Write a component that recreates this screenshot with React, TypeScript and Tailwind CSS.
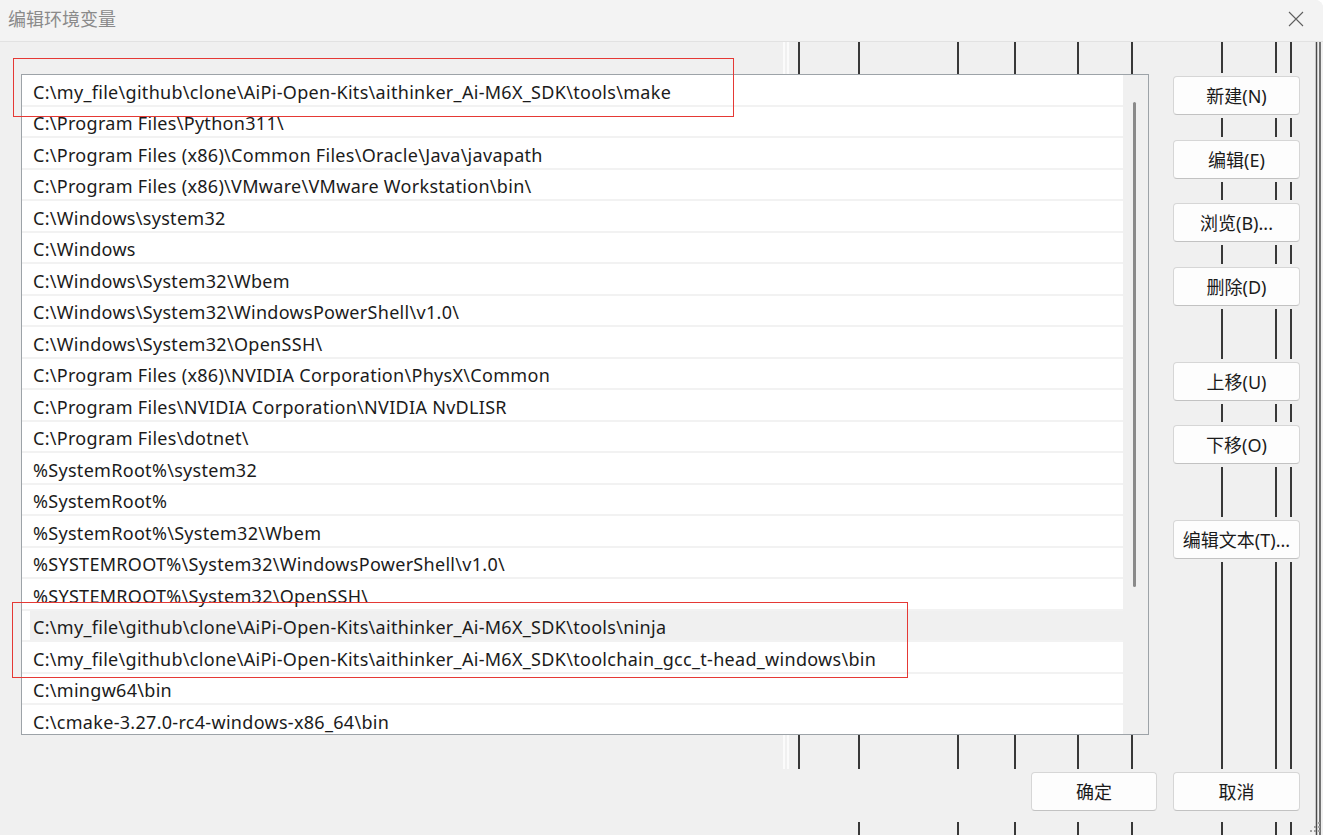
import React from "react";

const FONT = { fontFamily: '"Noto Sans", "Noto Sans CJK SC", sans-serif' };

const paths = [
  "C:\\my_file\\github\\clone\\AiPi-Open-Kits\\aithinker_Ai-M6X_SDK\\tools\\make",
  "C:\\Program Files\\Python311\\",
  "C:\\Program Files (x86)\\Common Files\\Oracle\\Java\\javapath",
  "C:\\Program Files (x86)\\VMware\\VMware Workstation\\bin\\",
  "C:\\Windows\\system32",
  "C:\\Windows",
  "C:\\Windows\\System32\\Wbem",
  "C:\\Windows\\System32\\WindowsPowerShell\\v1.0\\",
  "C:\\Windows\\System32\\OpenSSH\\",
  "C:\\Program Files (x86)\\NVIDIA Corporation\\PhysX\\Common",
  "C:\\Program Files\\NVIDIA Corporation\\NVIDIA NvDLISR",
  "C:\\Program Files\\dotnet\\",
  "%SystemRoot%\\system32",
  "%SystemRoot%",
  "%SystemRoot%\\System32\\Wbem",
  "%SYSTEMROOT%\\System32\\WindowsPowerShell\\v1.0\\",
  "%SYSTEMROOT%\\System32\\OpenSSH\\",
  "C:\\my_file\\github\\clone\\AiPi-Open-Kits\\aithinker_Ai-M6X_SDK\\tools\\ninja",
  "C:\\my_file\\github\\clone\\AiPi-Open-Kits\\aithinker_Ai-M6X_SDK\\toolchain_gcc_t-head_windows\\bin",
  "C:\\mingw64\\bin",
  "C:\\cmake-3.27.0-rc4-windows-x86_64\\bin",
];

// dark artefact lines behind the dialog body
const fullLines = [859, 958, 1015, 1078, 1132, 1222, 1276, 1291];

function Btn({ label, w = "w-[127px]" }: { label: string; w?: string }) {
  return (
    <div
      className={`${w} h-[39px] rounded-[4px] border border-[#d6d6d6] border-b-[#c2c2c2] bg-[#fdfdfd] flex items-center justify-center text-[18px] text-[#1b1b1b] leading-none`}
    >
      {label}
    </div>
  );
}

function BtnSlot({ label, mt }: { label: string; mt: string }) {
  return (
    <div className={`${mt} bg-[#f0f0f0] py-[3px] pl-[13px] pr-[10px]`}>
      <Btn label={label} />
    </div>
  );
}

export default function App() {
  return (
    <div className="w-[1326px] h-[835px] bg-white overflow-hidden" style={FONT}>
      <div className="relative w-[1323px] h-[835px] bg-[#f0f0f0] rounded-tr-[8px] overflow-hidden">
        {/* title bar */}
        <div className="h-[42px] bg-[#f3f3f3] border-b border-[#e2e2e2] flex items-center justify-between pl-[8px] pr-[19px]">
          <span className="text-[18px] text-[#8a8a8a] leading-none -mt-[4px]">编辑环境变量</span>
          <svg width="16" height="16" viewBox="0 0 16 16" className="-mt-[4px]">
            <path d="M1 1 L15 15 M15 1 L1 15" stroke="#5f5f5f" strokeWidth="1.1" fill="none" />
          </svg>
        </div>

        {/* body */}
        <div className="relative h-[793px]">
          <svg className="absolute inset-0" width="1323" height="793">
            <line x1="784" y1="0" x2="784" y2="731" stroke="#ffffff" strokeWidth="1.5" />
            <line x1="788" y1="0" x2="788" y2="731" stroke="#ffffff" strokeWidth="1.5" />
            <line x1="799" y1="0" x2="799" y2="731" stroke="#383838" strokeWidth="2" />
            {fullLines.map((x) => (
              <line key={x} x1={x} y1="0" x2={x} y2="793" stroke="#383838" strokeWidth="2" />
            ))}
            <line x1="1316.5" y1="0" x2="1316.5" y2="793" stroke="#4a4a4a" strokeWidth="1.5" />
            <line x1="1320" y1="0" x2="1320" y2="793" stroke="#4a4a4a" strokeWidth="1.5" />
            {[
              [1319, 781],
              [1319, 785],
              [1315, 785],
              [1319, 789],
              [1315, 789],
              [1311, 789],
            ].map(([cx, cy]) => (
              <rect key={`${cx}-${cy}`} x={cx - 1} y={cy - 1} width="2" height="2" fill="#a0a0a0" />
            ))}
          </svg>

          <div className="relative flex flex-col">
            <div className="flex items-start">
              {/* list */}
              <div className="ml-[21px] mt-[32px] w-[1128px] h-[661px] border border-[#9da3a8] bg-white flex overflow-hidden">
                <div className="flex-1 flex flex-col">
                  {paths.map((p, i) => (
                    <div key={i} className="h-[31.5px] shrink-0 border-b-2 border-[#f2f2f2] pl-[8px]">
                      <div
                        className={`h-full flex items-center pl-[3px] pt-[4px] ${i === 17 ? "bg-[#f0f0f0]" : ""}`}
                      >
                        <span className="text-[18px] text-[#1b1b1b] leading-none whitespace-nowrap tracking-[0.3px]">
                          {p}
                        </span>
                      </div>
                    </div>
                  ))}
                </div>
                <div className="w-[25px] h-full bg-[#f0f0f0]">
                  <div className="mt-[27px] ml-[10px] w-[3px] h-[485px] rounded-full bg-[#8a8a8a]" />
                </div>
              </div>

              {/* right buttons */}
              <div className="ml-[11px] w-[150px] mt-[31px] flex flex-col">
                <BtnSlot label="新建(N)" mt="mt-0" />
                <BtnSlot label="编辑(E)" mt="mt-[19px]" />
                <BtnSlot label="浏览(B)..." mt="mt-[18px]" />
                <BtnSlot label="删除(D)" mt="mt-[19px]" />
                <BtnSlot label="上移(U)" mt="mt-[50px]" />
                <BtnSlot label="下移(O)" mt="mt-[18px]" />
                <BtnSlot label="编辑文本(T)..." mt="mt-[50px]" />
              </div>
            </div>

            {/* footer */}
            <div className="mt-[34px] w-[1310px] h-[53px] bg-[#f0f0f0] pt-[3px] pr-[10px] flex justify-end gap-[16px]">
              <Btn label="确定" w="w-[126px]" />
              <Btn label="取消" />
            </div>
          </div>
        </div>

        {/* red annotation boxes */}
        <div className="absolute left-[13px] top-[58px] w-[721px] h-[59px] border border-[#e53935]" />
        <div className="absolute left-[12px] top-[602px] w-[896px] h-[76px] border border-[#e53935]" />
      </div>
    </div>
  );
}
